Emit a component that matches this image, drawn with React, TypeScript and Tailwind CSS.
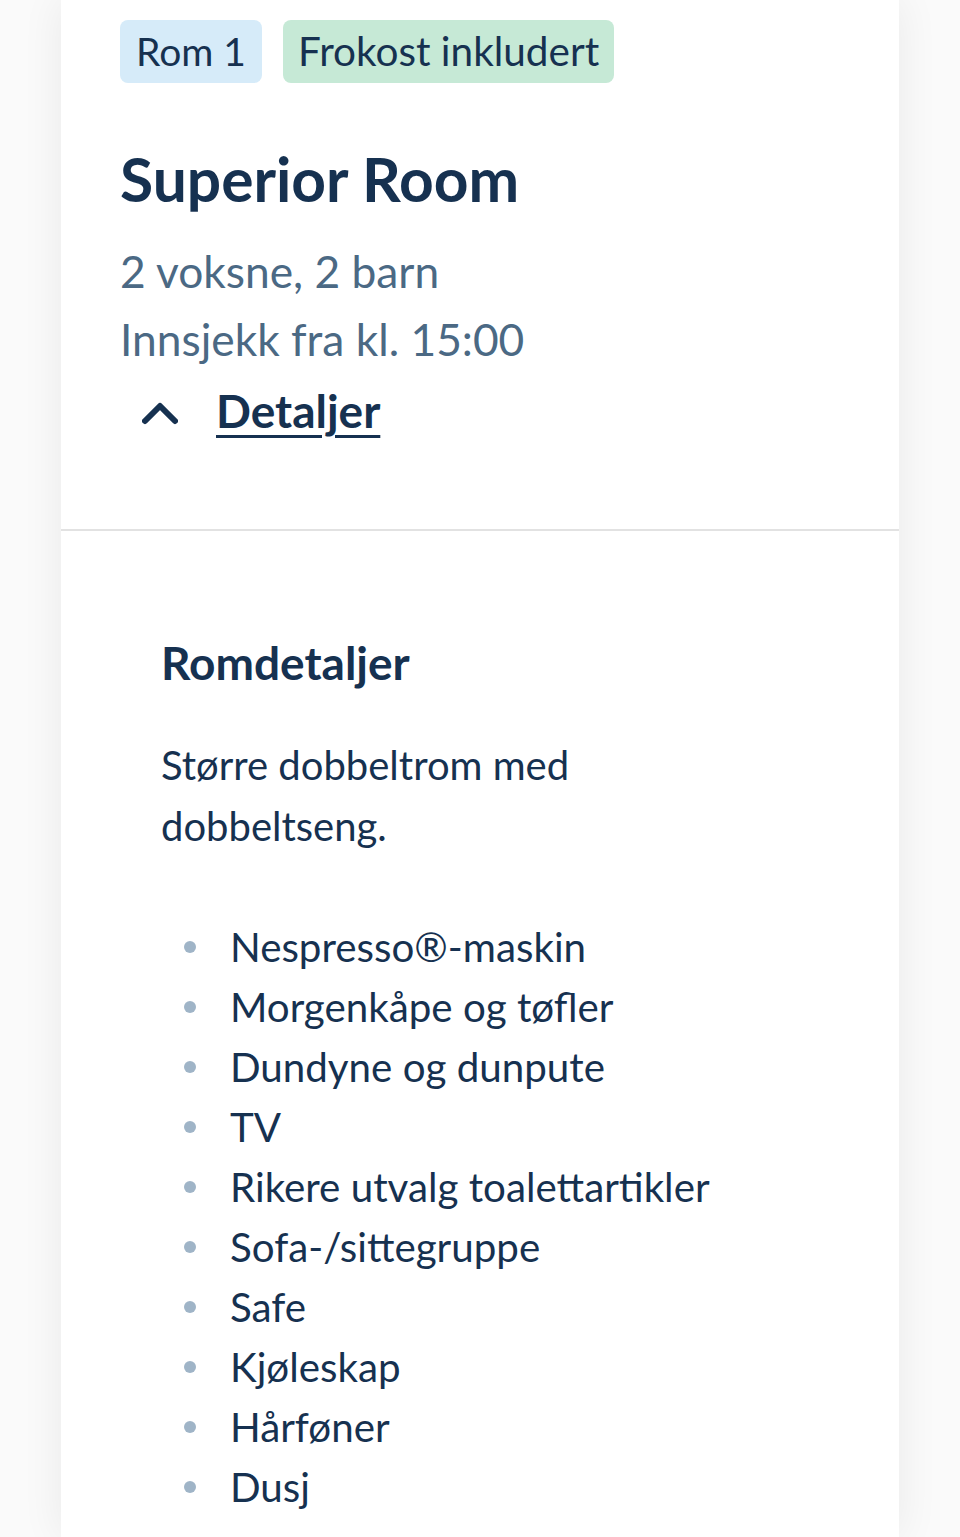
const amenities = [
  "Nespresso®-maskin",
  "Morgenkåpe og tøfler",
  "Dundyne og dunpute",
  "TV",
  "Rikere utvalg toalettartikler",
  "Sofa-/sittegruppe",
  "Safe",
  "Kjøleskap",
  "Hårføner",
  "Dusj",
];

export default function App() {
  return (
    <div
      className="h-[1537px] overflow-hidden bg-[#fafafa] px-[61px] text-[#163150]"
      style={{ fontFamily: "Lato, 'Noto Sans', sans-serif" }}
    >
      <div className="h-full bg-white shadow-[0_0_40px_rgba(0,0,0,0.07)]">
        <section className="px-[59px] pt-[20px] pb-[88px]">
          <div className="flex gap-[21px]">
            <span className="flex h-[63px] items-center rounded-[8px] bg-[#d6ebf9] px-[16px] text-[39px] leading-none">
              Rom 1
            </span>
            <span className="flex h-[63px] items-center rounded-[8px] bg-[#c6e9d6] px-[15px] text-[40.5px] leading-none">
              Frokost inkludert
            </span>
          </div>

          <h1 className="mt-[60px] text-[60.5px] font-bold leading-[72px]">Superior Room</h1>

          <div className="mt-[22px] text-[44.3px] leading-[68px] text-[#4b6984]">
            <p>2 voksne, 2 barn</p>
            <p>Innsjekk fra kl. 15:00</p>
          </div>

          <button className="mt-[8px] flex items-center gap-[38px] pl-[22px] text-[46px] font-bold leading-[60px] text-[#163150]">
            <svg width="36" height="24" viewBox="0 0 36 24" fill="none" className="mt-[4px]">
              <polyline
                points="3,20 18,5 33,20"
                stroke="currentColor"
                strokeWidth="6"
                strokeLinecap="round"
                strokeLinejoin="round"
              />
            </svg>
            <span className="underline decoration-[3px] underline-offset-[7px]">Detaljer</span>
          </button>
        </section>

        <div className="h-[2px] bg-[#e2e2e2]" />

        <section className="px-[100px] pt-[102px]">
          <h2 className="text-[46px] font-bold leading-[60px]">Romdetaljer</h2>

          <p className="mt-[42px] max-w-[470px] text-[40px] leading-[61px]">
            Større dobbeltrom med dobbeltseng.
          </p>

          <ul className="mt-[60px] pl-[23px]">
            {amenities.map((item) => (
              <li key={item} className="flex items-center gap-[34px] text-[40.3px] leading-[60px]">
                <span className="h-[12px] w-[12px] shrink-0 rounded-full bg-[#9fb4c7]" />
                <span>{item}</span>
              </li>
            ))}
          </ul>
        </section>
      </div>
    </div>
  );
}
